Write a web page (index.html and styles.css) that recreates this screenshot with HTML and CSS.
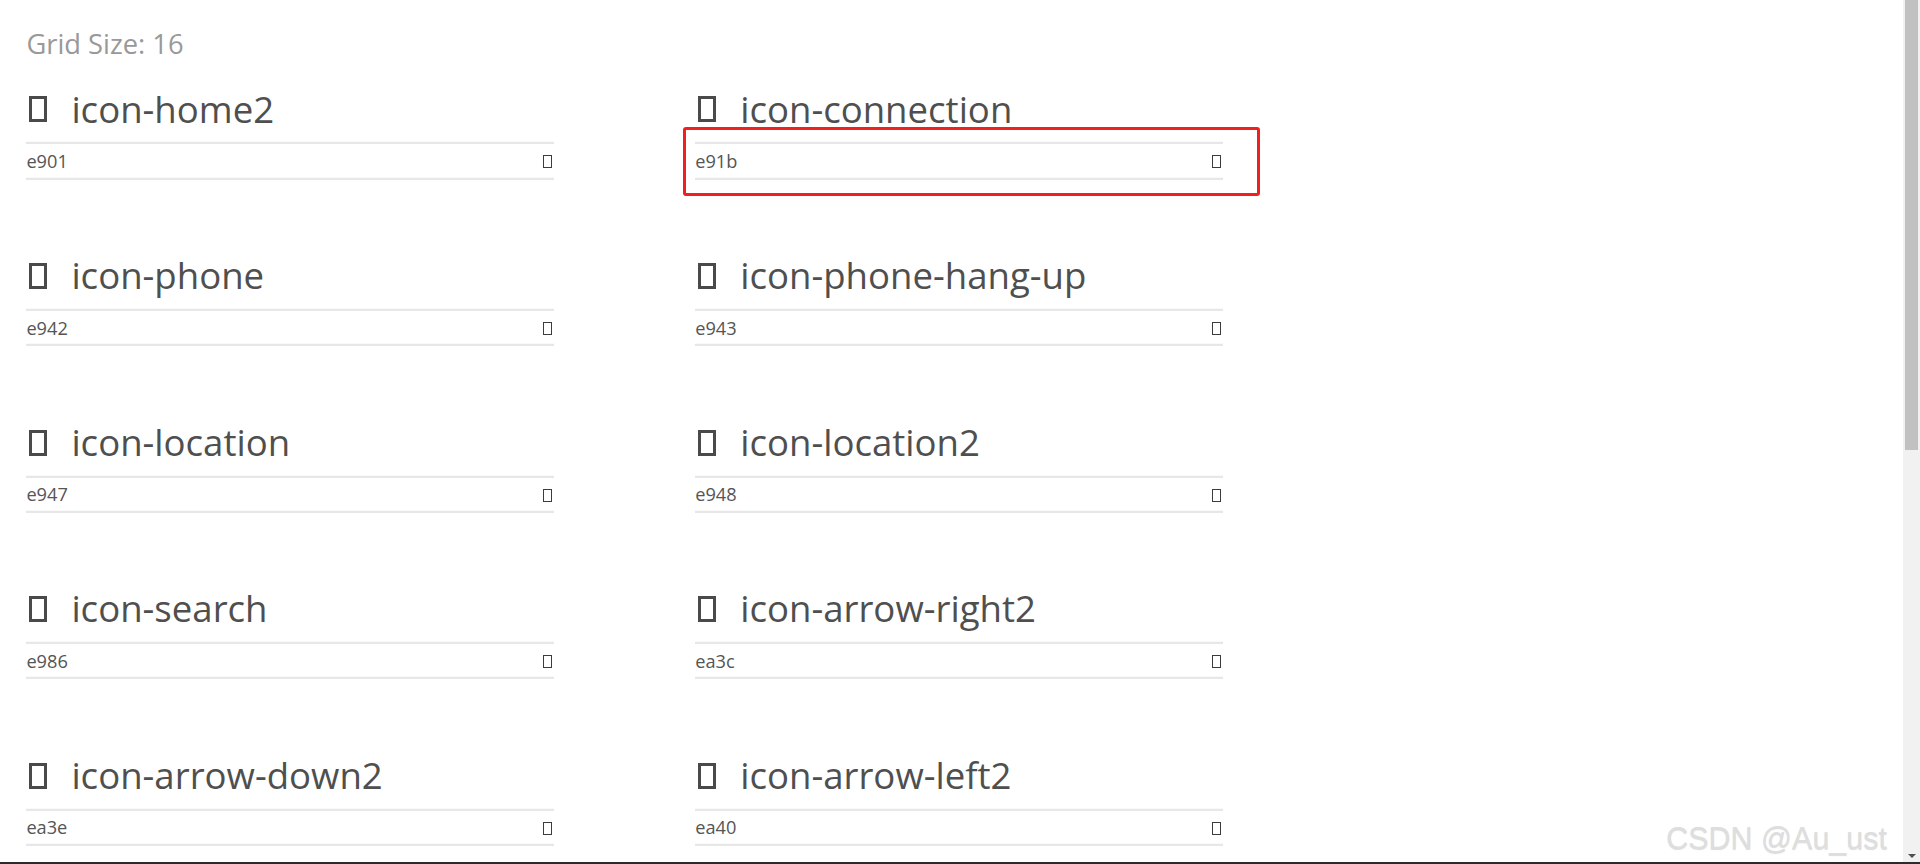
FILE: index.html
```html
<!DOCTYPE html>
<html lang="en">
<head>
<meta charset="utf-8">
<title>IcoMoon Demo</title>
<link rel="stylesheet" href="styles.css">
</head>
<body>
<div class="page">
  <h1 class="grid-title">Grid Size: 16</h1>
  <div class="glyphs">
    <div class="glyph">
      <div class="glyph-head"><span class="tofu"></span><span class="glyph-name">icon-home2</span></div>
      <div class="glyph-code"><span class="code">e901</span><span class="tofu-sm"></span></div>
    </div>
    <div class="glyph">
      <div class="glyph-head"><span class="tofu"></span><span class="glyph-name">icon-connection</span></div>
      <div class="glyph-code"><span class="code">e91b</span><span class="tofu-sm"></span></div>
      <div class="annot"></div>
    </div>
    <div class="glyph">
      <div class="glyph-head"><span class="tofu"></span><span class="glyph-name">icon-phone</span></div>
      <div class="glyph-code"><span class="code">e942</span><span class="tofu-sm"></span></div>
    </div>
    <div class="glyph">
      <div class="glyph-head"><span class="tofu"></span><span class="glyph-name">icon-phone-hang-up</span></div>
      <div class="glyph-code"><span class="code">e943</span><span class="tofu-sm"></span></div>
    </div>
    <div class="glyph">
      <div class="glyph-head"><span class="tofu"></span><span class="glyph-name">icon-location</span></div>
      <div class="glyph-code"><span class="code">e947</span><span class="tofu-sm"></span></div>
    </div>
    <div class="glyph">
      <div class="glyph-head"><span class="tofu"></span><span class="glyph-name">icon-location2</span></div>
      <div class="glyph-code"><span class="code">e948</span><span class="tofu-sm"></span></div>
    </div>
    <div class="glyph">
      <div class="glyph-head"><span class="tofu"></span><span class="glyph-name">icon-search</span></div>
      <div class="glyph-code"><span class="code">e986</span><span class="tofu-sm"></span></div>
    </div>
    <div class="glyph">
      <div class="glyph-head"><span class="tofu"></span><span class="glyph-name">icon-arrow-right2</span></div>
      <div class="glyph-code"><span class="code">ea3c</span><span class="tofu-sm"></span></div>
    </div>
    <div class="glyph">
      <div class="glyph-head"><span class="tofu"></span><span class="glyph-name">icon-arrow-down2</span></div>
      <div class="glyph-code"><span class="code">ea3e</span><span class="tofu-sm"></span></div>
    </div>
    <div class="glyph">
      <div class="glyph-head"><span class="tofu"></span><span class="glyph-name">icon-arrow-left2</span></div>
      <div class="glyph-code"><span class="code">ea40</span><span class="tofu-sm"></span></div>
    </div>
  </div>
</div>
<div class="scrollbar"><div class="thumb"></div><div class="arrow-down"></div></div>
<div class="watermark">CSDN @Au_ust</div>
<div class="bottom-edge"></div>
</body>
</html>
```
FILE: styles.css
```css
html, body {
  margin: 0;
  padding: 0;
  background: #fff;
}
body {
  font-family: "Open Sans", "Noto Sans", sans-serif;
  color: #555;
  height: 864px;
  overflow: hidden;
  position: relative;
}
.page {
  padding: 24px 0 0 26.4px;
}
.grid-title {
  margin: 0 0 19.8px;
  font-size: 27.3px;
  line-height: 39.6px;
  font-weight: normal;
  color: #999;
}
.glyphs {
  display: grid;
  grid-template-columns: 528px 528px;
  column-gap: 140.8px;
  row-gap: 35.2px;
}
.glyph {
  position: relative;
  padding-bottom: 35.2px;
}
.glyph-head {
  height: 61px;
  box-sizing: border-box;
  padding-bottom: 10px;
  display: flex;
  align-items: center;
  box-shadow: inset 0 -2.2px #e7e7e7;
  font-size: 36.6px;
  line-height: 52.8px;
  color: #4f4f4f;
}
.tofu {
  display: inline-block;
  flex: none;
  width: 18px;
  height: 26px;
  box-sizing: border-box;
  border: 3px solid #4a4a4a;
  margin-left: 3px;
  margin-right: 24px;
  margin-top: 1px;
}
.glyph-name {
  white-space: nowrap;
}
.glyph-code {
  height: 35.2px;
  display: flex;
  align-items: center;
  justify-content: space-between;
  box-shadow: inset 0 -2.2px #e7e7e7;
  font-size: 18.2px;
  padding-bottom: 2px;
  box-sizing: border-box;
}
.tofu-sm {
  display: inline-block;
  width: 9px;
  height: 13px;
  box-sizing: border-box;
  border: 1px solid #3c3c3c;
  margin-right: 2px;
  margin-top: 2px;
}
.annot {
  position: absolute;
  left: -12px;
  top: 43.5px;
  width: 577px;
  height: 69px;
  box-sizing: border-box;
  border: 3px solid #f21f1f;
  border-radius: 3px;
}
.scrollbar {
  position: absolute;
  top: 0;
  right: 0;
  width: 17px;
  height: 862px;
  background: #f1f1f1;
}
.thumb {
  margin: 0 2px;
  height: 450px;
  background: #c1c1c1;
}
.arrow-down {
  position: absolute;
  bottom: 4px;
  left: 5px;
  width: 0;
  height: 0;
  border-left: 4px solid transparent;
  border-right: 4px solid transparent;
  border-top: 4px solid #505050;
}
.watermark {
  position: absolute;
  right: 33px;
  bottom: 8px;
  font-family: "Liberation Sans", Arial, sans-serif;
  font-size: 30.5px;
  color: #dedede;
  text-shadow: 0 1px 1px rgba(0,0,0,0.14), 0 -1px 0 rgba(255,255,255,0.8);
  white-space: nowrap;
}
.bottom-edge {
  position: absolute;
  left: 0;
  right: 0;
  bottom: 0;
  height: 2px;
  background: #2b2b2b;
}
```
